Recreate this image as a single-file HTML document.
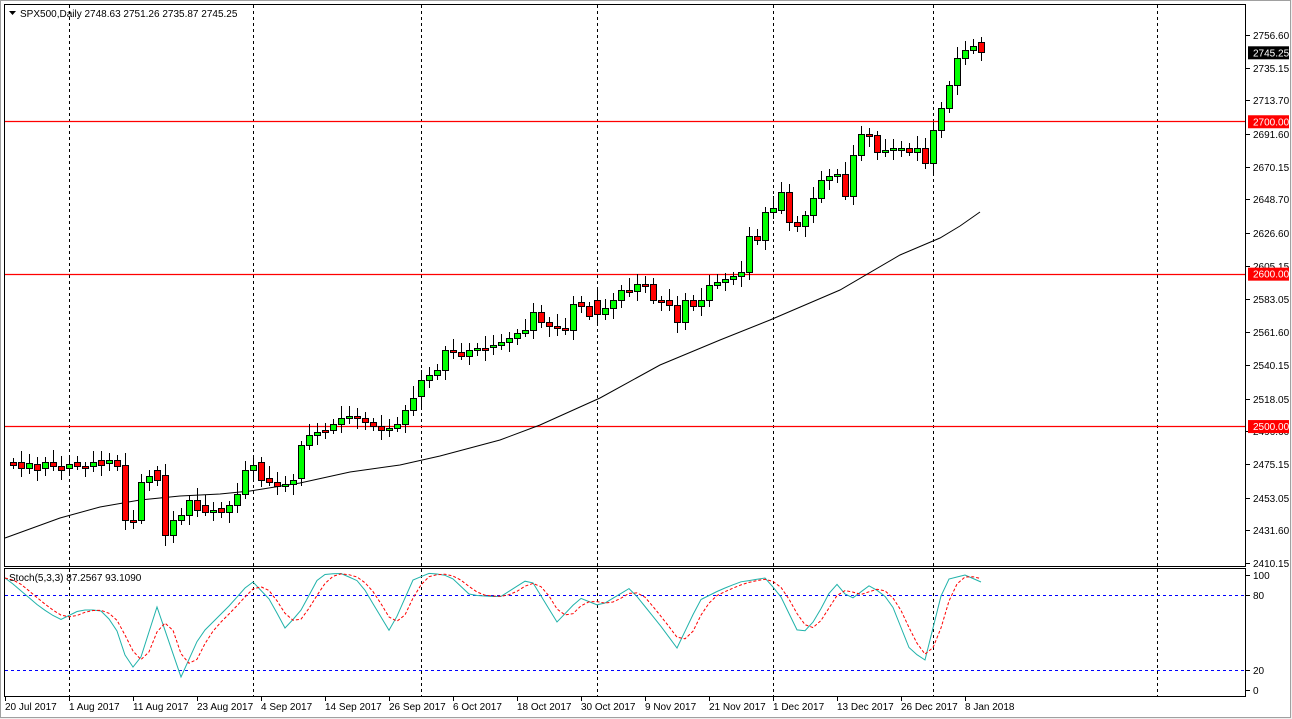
<!DOCTYPE html>
<html><head><meta charset="utf-8"><style>
html,body{margin:0;padding:0;background:#fff;width:1292px;height:719px;overflow:hidden}
svg text{font-family:"Liberation Sans",sans-serif;font-size:10px}
</style></head><body>
<svg id="s" width="1292" height="719" xmlns="http://www.w3.org/2000/svg">
<rect x="0" y="0" width="1292" height="719" fill="#f0f0f0"/>
<rect x="0.5" y="0.5" width="1290" height="717" fill="#fff" stroke="#a0a0a0"/>
<rect x="4.5" y="4.5" width="1241" height="562" fill="#fff" stroke="#000"/>
<rect x="4.5" y="568.5" width="1241" height="128" fill="#fff" stroke="#000"/>
<g id="g"></g>
</svg>
<script>
const g=document.getElementById('g');let h='';
const Y=p=>35+(2756.6-p)*1.524;
[69,253,421,597,773,933,1157].forEach(x=>{h+=`<line x1="${x+.5}" y1="5" x2="${x+.5}" y2="696" stroke="#000" stroke-dasharray="3,3"/>`});
[2700,2600,2500].forEach(p=>{const y=Math.round(Y(p))+.5;h+=`<line x1="5" y1="${y}" x2="1245" y2="${y}" stroke="#f00" stroke-width="1.3"/>`});
[595,670].forEach(y=>{h+=`<line x1="5" y1="${y+.5}" x2="1245" y2="${y+.5}" stroke="#00f" stroke-dasharray="3,3"/>`});
h+=`<polyline fill="none" stroke="#000" points="5,538 60,518 100,507 140,500 180,496 220,494 250,491 300,483 350,472 400,465 440,456 500,440 540,425 600,398 660,365 720,340 770,320 840,290 900,255 940,238 960,226 980,212"/>`;
const c=[465,468,463,470,462,466,470,464,466,468,462,465,460,466,520,520,482,476,480,535,520,515,500,510,512,510,512,505,494,470,465,480,482,486,484,480,445,435,432,430,424,418,416,418,422,426,430,428,424,410,398,380,375,370,350,352,356,350,348,347,345,342,338,333,330,312,322,326,328,330,304,306,316,314,308,300,290,291,284,284,300,300,305,322,300,306,300,285,282,279,276,272,236,240,212,208,192,222,226,215,198,180,176,174,196,155,134,135,152,150,150,148,152,148,163,130,108,85,58,50,46,52];
const o=[462,462,468,464,468,462,466,468,462,466,466,460,463,460,465,520,520,482,470,475,535,520,515,500,505,512,508,512,505,494,470,462,478,482,486,484,478,445,435,430,430,424,418,416,418,422,426,430,428,424,410,396,380,375,370,350,352,356,350,348,347,345,342,338,333,330,312,322,326,328,330,302,306,300,314,308,300,290,291,284,284,300,300,305,322,300,306,300,285,282,279,276,272,236,240,212,210,192,222,226,215,198,180,176,174,196,155,134,135,152,150,150,148,152,148,163,130,108,85,58,50,42];
let x0=981-8*(c.length-1);
for(let i=0;i<c.length;i++){const x=x0+8*i;let cl=c[i],op=o[i];if(Math.abs(cl-op)<2){cl=op+(i%2?1:-1)*2}
const t=Math.min(cl,op),b=Math.max(cl,op);const up=cl<op;const wt=t-4-(i*7%9),wb=b+4+(i*5%8);
h+=`<line x1="${x+.5}" y1="${wt}" x2="${x+.5}" y2="${wb}" stroke="#000"/><rect x="${x-2.5}" y="${t+.5}" width="6" height="${b-t}" fill="${up?'#00ff00':'#ff0000'}" stroke="#000"/>`}
const k=[[6,578],[20,590],[40,607],[60,620],[80,610],[100,610],[115,625],[130,670],[140,660],[157,607],[181,677],[200,635],[215,620],[230,605],[245,588],[253,582],[270,600],[285,628],[300,612],[320,575],[340,573],[360,582],[390,632],[413,580],[430,573],[450,576],[470,595],[500,597],[530,578],[557,622],[580,598],[600,606],[630,588],[660,625],[677,648],[700,600],[720,590],[740,582],[765,578],[780,595],[800,636],[815,620],[835,582],[850,600],[870,585],[890,600],[910,650],[925,660],[945,580],[965,575],[981,582]];
// resample per candle
const ks=[];for(let x=5;x<=981;x+=8){let j=0;while(j<k.length-2&&k[j+1][0]<x)j++;const a=k[j],b=k[j+1];const t=Math.max(0,Math.min(1,(x-a[0])/(b[0]-a[0])));ks.push([x,a[1]+(b[1]-a[1])*t]);}
h+=`<polyline fill="none" stroke="#20b2aa" points="${ks.map(p=>p[0]+','+p[1].toFixed(1)).join(' ')}"/>`;
const sg=ks.map((p,i)=>{const a=ks[Math.max(0,i-1)][1],b=ks[Math.max(0,i-2)][1];return p[0]+','+((p[1]+a+b)/3).toFixed(1)});
h+=`<polyline fill="none" stroke="#f00" stroke-dasharray="3,2" points="${sg.join(' ')}"/>`;
[2756.60,2735.15,2713.70,2691.60,2670.15,2648.70,2626.60,2605.15,2583.05,2561.60,2540.15,2518.05,2496.60,2475.15,2453.05,2431.60,2410.15].forEach(p=>{const y=Math.round(Y(p));h+=`<line x1="1246" y1="${y+.5}" x2="1250" y2="${y+.5}" stroke="#000"/><text x="1253" y="${y+4}">${p.toFixed(2)}</text>`});
h+=`<rect x="1248" y="${Y(2745.25)-6}" width="41" height="13" fill="#000"/><text x="1253" y="${Y(2745.25)+4}" fill="#fff">2745.25</text>`;
[2700,2600,2500].forEach(p=>{const y=Y(p);h+=`<rect x="1248" y="${y-6}" width="41" height="13" fill="#f00"/><text x="1253" y="${y+4}" fill="#fff">${p.toFixed(2)}</text>`});
[[575,'100'],[595,'80'],[670,'20'],[690,'0']].forEach(a=>{h+=`<line x1="1246" y1="${a[0]+.5}" x2="1250" y2="${a[0]+.5}" stroke="#000"/><text x="1253" y="${a[0]+4}">${a[1]}</text>`});
[['20 Jul 2017',5],['1 Aug 2017',69],['11 Aug 2017',133],['23 Aug 2017',197],['4 Sep 2017',261],['14 Sep 2017',325],['26 Sep 2017',389],['6 Oct 2017',453],['18 Oct 2017',517],['30 Oct 2017',581],['9 Nov 2017',645],['21 Nov 2017',709],['1 Dec 2017',773],['13 Dec 2017',837],['26 Dec 2017',901],['8 Jan 2018',965]].forEach(d=>{h+=`<line x1="${d[1]+.5}" y1="697" x2="${d[1]+.5}" y2="701" stroke="#000"/><text x="${d[1]}" y="710">${d[0]}</text>`});
h+=`<path d="M9,11 L16,11 L12.5,15 Z" fill="#000"/><text x="20" y="17">SPX500,Daily  2748.63 2751.26 2735.87 2745.25</text>`;
h+=`<text x="9" y="581">Stoch(5,3,3) 87.2567 93.1090</text>`;
g.innerHTML=h;
</script>
</body></html>
